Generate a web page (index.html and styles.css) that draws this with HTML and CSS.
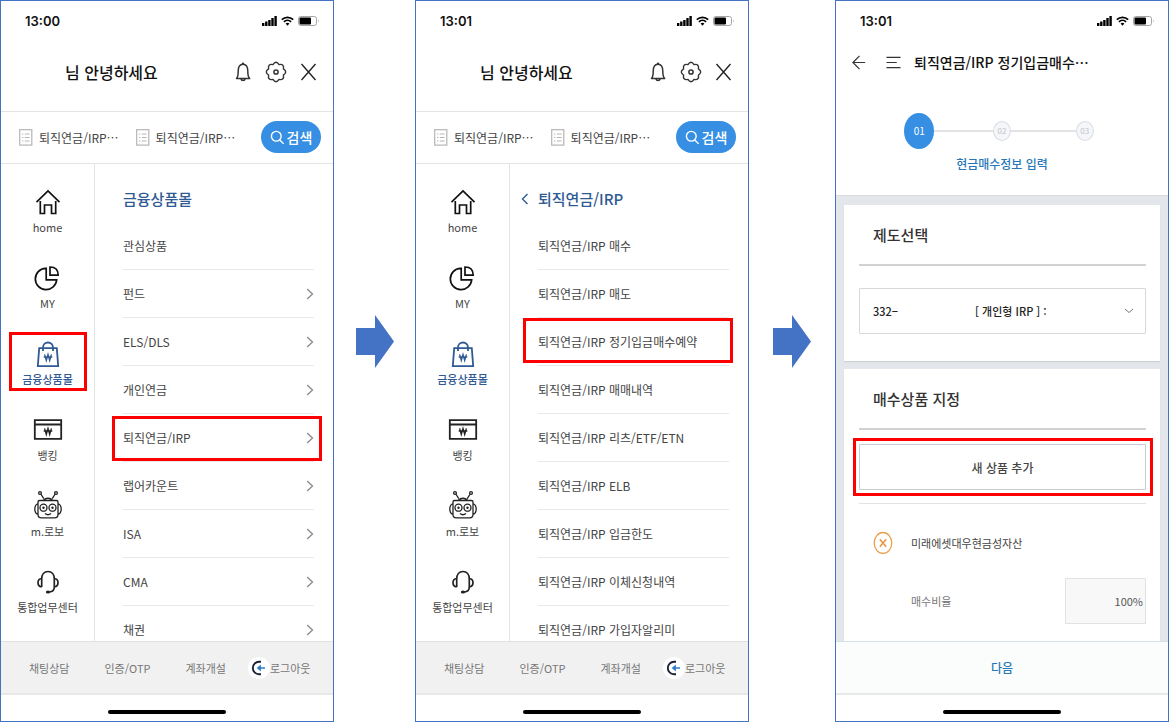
FILE: index.html
```
<!DOCTYPE html>
<html lang="ko">
<head>
    <meta charset="UTF-8">
    <meta name="viewport" content="width=device-width, initial-scale=1.0">
    <title>퇴직연금/IRP 정기입금매수예약</title>
    <link rel="stylesheet" href="styles.css">
</head>
<body>

<!-- Shared icons -->
<svg class="sprite" aria-hidden="true">
    <symbol id="signal" viewBox="0 0 15 10">
        <path d="M0 7h2.4v3H0zM3.1 5.5h2.4V10H3.1zM6.2 4h2.4v6H6.2zM9.3 2h2.4v8H9.3zM12.4 0h2.4v10h-2.4z" fill="#000"/>
    </symbol>
    <symbol id="wifi" viewBox="0 0 13 10">
        <path d="M.8 3.6a8.3 8.3 0 0 1 11.4 0M2.9 5.8a5.2 5.2 0 0 1 7.2 0" fill="none" stroke="#000" stroke-width="1.7"/>
        <path d="M4.6 7.6a2.8 2.8 0 0 1 3.8 0L6.5 9.7z" fill="#000"/>
    </symbol>
    <symbol id="battery" viewBox="0 0 22 10">
        <rect x=".5" y=".5" width="18" height="9" rx="2.2" fill="#fff" stroke="#a5a5a5"/>
        <rect x="1.5" y="1.5" width="11.5" height="7" rx="1" fill="#000"/>
        <path d="M20 3.5q1.4 1.5 0 3z" fill="#a5a5a5"/>
    </symbol>
    <symbol id="bell" viewBox="0 0 24 24">
        <path d="M5.5 18.5c1.600-1.500 1.700-3 1.700-7.200C7.200 7 9 4.200 12 4.200s4.800 2.800 4.800 7.100c0 4.200.2 5.700 1.900 7.200z M9.900 18.800a2.200 2.200 0 0 0 4.300 0M11 4q1-1.300 2 0" fill="none" stroke="#333" stroke-width="1.500" stroke-linejoin="round"/>
    </symbol>
    <symbol id="gear" viewBox="0 0 24 24">
        <path d="M8.950 4.600Q12 0 15.050 4.600Q20.500 3.500 19.400 8.950Q24 12 19.400 15.050Q20.500 20.500 15.050 19.400Q12 24 8.950 19.400Q3.500 20.500 4.600 15.050Q0 12 4.600 8.950Q3.500 3.500 8.950 4.600Z" fill="none" stroke="#333" stroke-width="1.400" stroke-linejoin="round"/>
        <circle cx="12" cy="12" r="2.100" fill="none" stroke="#333" stroke-width="1.500"/>
    </symbol>
    <symbol id="close" viewBox="0 0 24 24">
        <path d="M4.500 4l14 16M18.500 4l-14 16" stroke="#222" stroke-width="1.400"/>
    </symbol>
    <symbol id="doc" viewBox="0 0 14 17">
        <rect x=".7" y=".7" width="12.100" height="15.400" fill="none" stroke="#b5b5b5" stroke-width="1.200"/>
        <path d="M3 5h1.300M5.800 5h4.800M3 8.500h1.300M5.800 8.500h4.800M3 12h1.300M5.800 12h4.800" stroke="#b5b5b5"/>
    </symbol>
    <symbol id="search" viewBox="0 0 16 16">
        <circle cx="6.700" cy="6.700" r="5.200" fill="none" stroke="#fff" stroke-width="1.500"/>
        <path d="M10.400 10.600l4.200 4.200" stroke="#fff" stroke-width="1.500"/>
    </symbol>
    <symbol id="chevron" viewBox="0 0 8 12">
        <path d="M1.200 1l5.300 5-5.300 5" fill="none" stroke="#8a8a8a" stroke-width="1.300"/>
    </symbol>
    <symbol id="home" viewBox="0 0 32 32">
        <path d="M4.500 16.200L16 5l11.500 11.200M8.300 15v12.500h4.200v-8.500h7v8.500h4.200V15" fill="none" stroke="#111" stroke-width="1.700"/>
    </symbol>
    <symbol id="pie" viewBox="0 0 32 32">
        <path d="M13.500 6.300a10.700 10.700 0 1 0 11.200 11.500H14.200V6.300z" fill="none" stroke="#111" stroke-width="1.700"/>
        <path d="M18 5v8.200h8.200C26.200 8 23 5 18 5z" fill="none" stroke="#111" stroke-width="1.700"/>
    </symbol>
    <symbol id="bag" viewBox="0 0 32 32">
        <path d="M7.200 10.200h17.600l1.400 18H5.800z M11 13V9.500a5 5 0 0 1 10 0V13" fill="none" stroke="#2f5a93" stroke-width="1.800"/>
        <path d="M12.600 16.300l1.700 6.200 1.700-6 1.700 6 1.700-6.200M11.700 19h8.600" fill="none" stroke="#2f5a93" stroke-width="1.300"/>
    </symbol>
    <symbol id="bank" viewBox="0 0 32 32">
        <path d="M2.800 6.200h26.400v18.600H2.800zM2.800 10.500h26.400" fill="none" stroke="#222" stroke-width="1.800"/>
        <path d="M12.600 14.300l1.700 6.200 1.700-6 1.700 6 1.700-6.200M11.700 17h8.600" fill="none" stroke="#222" stroke-width="1.300"/>
    </symbol>
    <symbol id="robot" viewBox="0 0 32 32">
        <g fill="none" stroke="#222" stroke-width="1.300">
            <path d="M6 12q0-1.500 1.500-1.500h17q1.500 0 1.500 1.500v12.500q0 3.300-3.300 3.300H9.300Q6 27.800 6 24.500zM11 10.500q5-4.500 10 0M8.800 4l3 4.600M23.200 4l-3 4.600M6 13.500q-3.200 1.200-3.200 5.500T6 24.500M26 13.500q3.200 1.200 3.200 5.500T26 24.500M13 23.500q3 2.600 6 0"/>
            <circle cx="8" cy="3" r="1.400"/>
            <circle cx="24" cy="3" r="1.400"/>
            <circle cx="11.500" cy="17.700" r="3.500"/>
            <circle cx="20.500" cy="17.700" r="3.500"/>
        </g>
        <circle cx="11.500" cy="17.700" r="1.200" fill="#222"/>
        <circle cx="20.500" cy="17.700" r="1.200" fill="#222"/>
    </symbol>
    <symbol id="headset" viewBox="0 0 32 32">
        <path d="M9.700 21V13c0-4.500 2.500-7.500 6.300-7.500s6.300 3 6.300 7.500v8c0 3-1.800 4.800-5 5M9.700 12.500Q6 13 6 16.700T9.700 21M22.300 12.500q3.700.5 3.700 4.200T22.300 21" fill="none" stroke="#222" stroke-width="1.700"/>
        <ellipse cx="16" cy="26" rx="2.200" ry="1.500" fill="#222"/>
    </symbol>
    <symbol id="logout" viewBox="0 0 22 22">
        <circle cx="11" cy="11" r="11" fill="#fff"/>
        <path d="M13 4.800H11A6.200 6.200 0 0 0 11 17.200H13" fill="none" stroke="#1a2238" stroke-width="1.900"/>
        <path d="M17 11H10M12 9.300L10 11l2 1.700z" fill="#2f7cc9" stroke="#2f7cc9" stroke-width="1.700"/>
    </symbol>
    <symbol id="arrow" viewBox="0 0 38 53">
        <path d="M0 13h19V0l19 26.500L19 53V40H0z" fill="#4472c4"/>
    </symbol>
</svg>

<main class="guide">

    <!-- Step 1: full menu -->
    <section class="phone">
        <div class="status">
            <span class="time">13:00</span>
            <svg class="signal"><use href="#signal"/></svg>
            <svg class="wifi"><use href="#wifi"/></svg>
            <svg class="battery"><use href="#battery"/></svg>
        </div>
        <header class="greeting">
            <h1>님 안녕하세요</h1>
            <button class="icon-btn" aria-label="알림"><svg><use href="#bell"/></svg></button>
            <button class="icon-btn" aria-label="설정"><svg><use href="#gear"/></svg></button>
            <button class="icon-btn" aria-label="닫기"><svg><use href="#close"/></svg></button>
        </header>
        <div class="quick">
            <a href="#"><svg class="doc"><use href="#doc"/></svg>퇴직연금/IRP⋯</a>
            <a href="#"><svg class="doc"><use href="#doc"/></svg>퇴직연금/IRP⋯</a>
            <button class="search-btn"><svg><use href="#search"/></svg>검색</button>
        </div>
        <div class="content">
            <nav class="side">
                <a href="#"><svg><use href="#home"/></svg>home</a>
                <a href="#"><svg><use href="#pie"/></svg>MY</a>
                <a href="#" class="active marked"><svg><use href="#bag"/></svg>금융상품몰</a>
                <a href="#"><svg><use href="#bank"/></svg>뱅킹</a>
                <a href="#"><svg><use href="#robot"/></svg>m.로보</a>
                <a href="#"><svg><use href="#headset"/></svg>통합업무센터</a>
            </nav>
            <div class="menu">
                <h2>금융상품몰</h2>
                <ul>
                    <li><a href="#">관심상품</a></li>
                    <li><a href="#">펀드<svg><use href="#chevron"/></svg></a></li>
                    <li><a href="#">ELS/DLS<svg><use href="#chevron"/></svg></a></li>
                    <li><a href="#">개인연금<svg><use href="#chevron"/></svg></a></li>
                    <li class="marked"><a href="#">퇴직연금/IRP<svg><use href="#chevron"/></svg></a></li>
                    <li><a href="#">랩어카운트<svg><use href="#chevron"/></svg></a></li>
                    <li><a href="#">ISA<svg><use href="#chevron"/></svg></a></li>
                    <li><a href="#">CMA<svg><use href="#chevron"/></svg></a></li>
                    <li><a href="#">채권<svg><use href="#chevron"/></svg></a></li>
                </ul>
            </div>
        </div>
        <footer class="tabs">
            <a href="#">채팅상담</a>
            <a href="#">인증/OTP</a>
            <a href="#">계좌개설</a>
            <a href="#" class="logout"><svg><use href="#logout"/></svg>로그아웃</a>
        </footer>
        <div class="home-bar"><span></span></div>
    </section>

    <svg class="next-arrow"><use href="#arrow"/></svg>

    <!-- Step 2: IRP submenu -->
    <section class="phone">
        <div class="status">
            <span class="time">13:01</span>
            <svg class="signal"><use href="#signal"/></svg>
            <svg class="wifi"><use href="#wifi"/></svg>
            <svg class="battery"><use href="#battery"/></svg>
        </div>
        <header class="greeting">
            <h1>님 안녕하세요</h1>
            <button class="icon-btn" aria-label="알림"><svg><use href="#bell"/></svg></button>
            <button class="icon-btn" aria-label="설정"><svg><use href="#gear"/></svg></button>
            <button class="icon-btn" aria-label="닫기"><svg><use href="#close"/></svg></button>
        </header>
        <div class="quick">
            <a href="#"><svg class="doc"><use href="#doc"/></svg>퇴직연금/IRP⋯</a>
            <a href="#"><svg class="doc"><use href="#doc"/></svg>퇴직연금/IRP⋯</a>
            <button class="search-btn"><svg><use href="#search"/></svg>검색</button>
        </div>
        <div class="content">
            <nav class="side">
                <a href="#"><svg><use href="#home"/></svg>home</a>
                <a href="#"><svg><use href="#pie"/></svg>MY</a>
                <a href="#" class="active"><svg><use href="#bag"/></svg>금융상품몰</a>
                <a href="#"><svg><use href="#bank"/></svg>뱅킹</a>
                <a href="#"><svg><use href="#robot"/></svg>m.로보</a>
                <a href="#"><svg><use href="#headset"/></svg>통합업무센터</a>
            </nav>
            <div class="menu submenu">
                <h2>
                    <button class="back-btn" aria-label="이전"><svg viewBox="0 0 8 12"><path d="M6.500 1L1.500 6l5 5" fill="none" stroke="#2f5a93" stroke-width="1.400"/></svg></button>
                    퇴직연금/IRP
                </h2>
                <ul>
                    <li><a href="#">퇴직연금/IRP 매수</a></li>
                    <li><a href="#">퇴직연금/IRP 매도</a></li>
                    <li class="marked"><a href="#">퇴직연금/IRP 정기입금매수예약</a></li>
                    <li><a href="#">퇴직연금/IRP 매매내역</a></li>
                    <li><a href="#">퇴직연금/IRP 리츠/ETF/ETN</a></li>
                    <li><a href="#">퇴직연금/IRP ELB</a></li>
                    <li><a href="#">퇴직연금/IRP 입금한도</a></li>
                    <li><a href="#">퇴직연금/IRP 이체신청내역</a></li>
                    <li><a href="#">퇴직연금/IRP 가입자알리미</a></li>
                </ul>
            </div>
        </div>
        <footer class="tabs">
            <a href="#">채팅상담</a>
            <a href="#">인증/OTP</a>
            <a href="#">계좌개설</a>
            <a href="#" class="logout"><svg><use href="#logout"/></svg>로그아웃</a>
        </footer>
        <div class="home-bar"><span></span></div>
    </section>

    <svg class="next-arrow"><use href="#arrow"/></svg>

    <!-- Step 3: recurring purchase form -->
    <section class="phone">
        <div class="status">
            <span class="time">13:01</span>
            <svg class="signal"><use href="#signal"/></svg>
            <svg class="wifi"><use href="#wifi"/></svg>
            <svg class="battery"><use href="#battery"/></svg>
        </div>
        <header class="page-title">
            <button aria-label="뒤로"><svg viewBox="0 0 16 16"><path d="M14 8H1M8 1L1 8l7 7" fill="none" stroke="#333" stroke-width="1.300"/></svg></button>
            <button aria-label="메뉴"><svg viewBox="0 0 16 16"><path d="M.5 2.500h15M.5 8h11M.5 13.500h15" stroke="#333" stroke-width="1.300"/></svg></button>
            <h1>퇴직연금/IRP 정기입금매수⋯</h1>
        </header>
        <ol class="steps">
            <li class="current"><span>01</span></li>
            <li><span>02</span></li>
            <li><span>03</span></li>
        </ol>
        <p class="step-name">현금매수정보 입력</p>
        <form class="form" id="buyForm">
            <div class="card">
                <h2><label for="plan">제도선택</label></h2>
                <div class="select-box">
                    <select id="plan">
                        <option>332−&emsp;&emsp;&emsp;&emsp;&emsp;&emsp;&emsp;[ 개인형 IRP ] :</option>
                    </select>
                    <svg viewBox="0 0 10 6"><path d="M1 1l4 3.500L9 1" fill="none" stroke="#777"/></svg>
                </div>
            </div>
            <div class="card">
                <h2>매수상품 지정</h2>
                <div class="add-row marked">
                    <button type="button" class="add-btn">새 상품 추가</button>
                </div>
                <div class="product">
                    <button type="button" class="remove-btn" aria-label="삭제"><svg viewBox="0 0 20 24"><ellipse cx="10" cy="12" rx="8.800" ry="10.500" fill="none" stroke="#e9a14f" stroke-width="1.300"/><path d="M6.800 8.200l6.400 7.600M13.200 8.200l-6.400 7.600" stroke="#e9963e" stroke-width="1.500"/></svg></button>
                    <span>미래에셋대우현금성자산</span>
                </div>
                <div class="ratio">
                    <label for="ratio">매수비율</label>
                    <input type="text" id="ratio" value="100%">
                </div>
            </div>
        </form>
        <button class="next-btn" form="buyForm">다음</button>
        <div class="home-bar"><span></span></div>
    </section>

</main>

</body>
</html>
```
FILE: styles.css
```
* {
    box-sizing: border-box;
}

body {
    margin: 0;
    font-family: 'Noto Sans CJK KR', sans-serif;
    font-size: 12px;
    color: #444;
    background: #fff;
}

h1, h2, p, ul, ol {
    margin: 0;
    padding: 0;
}

ul, ol {
    list-style: none;
}

a {
    color: inherit;
    text-decoration: none;
}

button {
    margin: 0;
    padding: 0;
    border: none;
    background: none;
    font: inherit;
    color: inherit;
    cursor: pointer;
}

svg {
    display: block;
    flex: none;
}

.sprite {
    position: absolute;
    width: 0;
    height: 0;
}

/* Three phones with an arrow between each */
.guide {
    display: grid;
    grid-template-columns: 334fr 81fr 334fr 86fr 334fr;
    grid-template-rows: 100%;
    height: 100vh;
}

.phone {
    display: flex;
    flex-direction: column;
    min-width: 0;
    border: 1px solid #4472c4;
    background: #fff;
}

.next-arrow {
    width: 38px;
    height: 53px;
    place-self: center;
    margin-bottom: 40px;
}

/* Red frame over the item to tap */
.marked {
    position: relative;
}

.marked::after {
    content: "";
    position: absolute;
    border: 3px solid #f00;
    pointer-events: none;
}

/* Status bar */
.status {
    display: flex;
    align-items: center;
    gap: 4px;
    padding: 10px 13px 10px 24px;
    line-height: 20px;
}

.time {
    flex: 1;
    font-family: Inter, sans-serif;
    font-size: 13px;
    font-weight: 600;
    color: #111;
}

.signal {
    width: 15px;
    height: 10px;
}

.wifi {
    width: 13px;
    height: 10px;
}

.battery {
    width: 22px;
    height: 10px;
}

/* Greeting */
.greeting {
    display: flex;
    align-items: center;
    gap: 9px;
    padding: 15px 12px 23px 64px;
}

.greeting h1 {
    flex: 1;
    font-size: 16px;
    font-weight: 500;
    line-height: 32px;
    color: #111;
}

.icon-btn svg {
    width: 24px;
    height: 24px;
}

/* Shortcuts and search */
.quick {
    display: flex;
    align-items: center;
    gap: 17px;
    padding: 9px 12px 10px 18px;
    border-top: 1px solid #e4e4e4;
    border-bottom: 1px solid #e4e4e4;
}

.quick a {
    display: flex;
    align-items: center;
    gap: 6px;
    white-space: nowrap;
}

.doc {
    width: 14px;
    height: 17px;
}

.search-btn {
    display: flex;
    align-items: center;
    justify-content: center;
    gap: 2px;
    width: 60px;
    height: 32px;
    margin-left: auto;
    border-radius: 16px;
    background: #368fe2;
    color: #fff;
    font-size: 14px;
    font-weight: 500;
}

.search-btn svg {
    width: 15px;
    height: 15px;
}

/* Menu area */
.content {
    display: flex;
    flex: 1;
    min-height: 0;
    overflow: hidden;
}

.side {
    display: flex;
    flex-direction: column;
    gap: 26px;
    width: 94px;
    padding-top: 22px;
    border-right: 1px solid #e4e4e4;
}

.side a {
    display: flex;
    flex-direction: column;
    align-items: center;
    font-size: 11px;
    line-height: 18px;
}

.side svg {
    width: 32px;
    height: 32px;
}

.side .active {
    color: #2f5a93;
    font-weight: 500;
}

.side .marked::after {
    inset: -6px 7px -3px 8px;
}

.menu {
    flex: 1;
    padding: 23px 19px 0 28px;
}

.menu h2 {
    display: flex;
    align-items: center;
    margin-bottom: 11px;
    font-size: 15px;
    font-weight: 500;
    line-height: 24px;
    color: #2f5a93;
}

.menu li {
    border-bottom: 1px solid #e8e8e8;
}

.menu li a {
    display: flex;
    align-items: center;
    justify-content: space-between;
    height: 47px;
}

.menu li svg {
    width: 8px;
    height: 12px;
}

.menu .marked::after {
    inset: 2px -8px 0 -11px;
}

.submenu .marked::after {
    inset: 0 -4px 2px -15px;
}

.back-btn {
    margin-left: -17px;
    padding-right: 9px;
}

.back-btn svg {
    width: 8px;
    height: 12px;
}

/* Bottom tabs */
.tabs {
    display: flex;
    align-items: center;
    gap: 35px;
    height: 54px;
    padding: 0 23px 0 28px;
    border-top: 1px solid #e0e0e0;
    border-bottom: 2px solid #e8e8e8;
    background: #f1f1f1;
    color: #777;
    font-size: 11px;
}

.tabs a {
    white-space: nowrap;
}

.tabs .logout {
    display: flex;
    align-items: center;
    margin-left: -13px;
}

.tabs svg {
    width: 22px;
    height: 22px;
}

.home-bar {
    display: flex;
    justify-content: center;
    padding: 15px 0 7px;
}

.home-bar span {
    width: 118px;
    height: 4px;
    border-radius: 2px;
    background: #000;
}

/* Form page */
.page-title {
    display: flex;
    align-items: center;
    padding: 5px 16px;
    color: #111;
}

.page-title svg {
    width: 15px;
    height: 15px;
}

.page-title button {
    margin-right: 19px;
}

.page-title button + button {
    margin-right: 13px;
}

.page-title h1 {
    font-size: 14px;
    font-weight: 500;
    line-height: 32px;
    white-space: nowrap;
}

/* Progress steps, joined by a line behind the circles */
.steps {
    display: grid;
    grid-template-columns: repeat(3, 1fr);
    margin: 30px 42px 0;
    background: linear-gradient(#e2e3e5, #e2e3e5) center / 66% 2px no-repeat;
}

.steps li {
    display: flex;
    align-items: center;
    justify-content: center;
    height: 36px;
}

.steps span {
    width: 18px;
    height: 20px;
    border: 1px solid #d9dce2;
    border-radius: 50%;
    background: #f5f6f9;
    color: #bfc3ca;
    font-size: 8px;
    line-height: 18px;
    text-align: center;
}

.steps .current span {
    width: 30px;
    height: 36px;
    border: none;
    background: #368fe2;
    color: #fff;
    font-size: 10px;
    line-height: 36px;
}

.step-name {
    padding: 5px 0 21px;
    text-align: center;
    line-height: 20px;
    color: #2878b8;
    font-weight: 500;
}

.form {
    flex: 1;
    min-height: 0;
    overflow: hidden;
    padding: 9px 8px 0;
    border-top: 1px solid #d8dcdc;
    background: #e3e6ea;
}

.card {
    margin-bottom: 8px;
    padding: 0 14px 27px 15px;
    background: #fff;
    box-shadow: 0 1px 1px #cdd1d5;
}

.card h2 {
    padding-left: 14px;
    border-bottom: 2px solid #d2d2d2;
    font-size: 15px;
    font-weight: 500;
    line-height: 59px;
    color: #333;
}

.select-box {
    position: relative;
    margin-top: 22px;
}

.select-box select {
    appearance: none;
    width: 100%;
    height: 46px;
    padding: 0 13px;
    border: 1px solid #d8d8d8;
    border-radius: 1px;
    background: #fff;
    color: #222;
    font-family: inherit;
    font-size: 11px;
    font-weight: 500;
}

.select-box svg {
    position: absolute;
    top: 20px;
    right: 12px;
    width: 10px;
    height: 6px;
    pointer-events: none;
}

.add-row {
    padding: 14px 0 13px;
    border-bottom: 1px solid #e2e2e2;
}

.add-btn {
    width: 100%;
    height: 46px;
    border: 1px solid #c9cdd0;
    border-radius: 1px;
    font-weight: 500;
}

.add-row::after {
    inset: 8px -7px 7px -6px;
}

.product {
    display: flex;
    align-items: center;
    gap: 18px;
    padding: 27px 0 23px 14px;
    font-size: 11px;
}

.remove-btn svg {
    width: 20px;
    height: 24px;
}

.ratio {
    display: flex;
    align-items: center;
    justify-content: space-between;
    padding-left: 52px;
    font-size: 11px;
    color: #777;
}

.ratio input {
    width: 81px;
    height: 46px;
    padding: 0 2px;
    border: 1px solid #e2e2e2;
    background: #f8f8f8;
    color: #555;
    font-family: inherit;
    font-size: 11px;
    text-align: right;
}

.next-btn {
    height: 54px;
    border-top: 1px solid #d3e2e6;
    border-bottom: 2px solid #e8e8e8;
    background: #fbfdfc;
    color: #2878b8;
    font-weight: 500;
}
```
